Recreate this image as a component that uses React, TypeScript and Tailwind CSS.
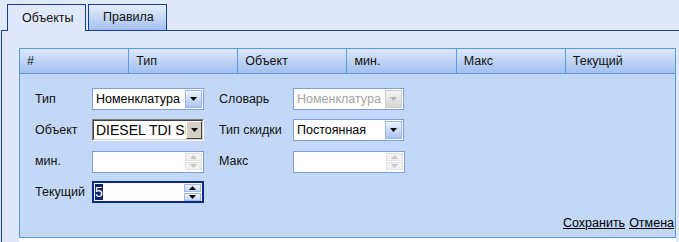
import React from 'react'

const COLS = ['#', 'Тип', 'Объект', 'мин.', 'Макс', 'Текущий']

function Tri({ up = false, color = '#000' }: { up?: boolean; color?: string }) {
  return (
    <svg width="7" height="4" viewBox="0 0 7 4">
      <path d={up ? 'M0 4h7L3.5 0z' : 'M0 0h7L3.5 4z'} fill={color} />
    </svg>
  )
}

function Select({ value, disabled, w = 'w-[112px]' }: { value: string; disabled?: boolean; w?: string }) {
  return (
    <div className={`flex h-[22px] ${w} items-center border border-[#7f9fdc] bg-white`}>
      <span className={`min-w-0 flex-1 overflow-hidden whitespace-nowrap pl-[3px] text-[12.5px] ${disabled ? 'text-[#a3a3a3]' : 'text-black'}`}>{value}</span>
      {disabled ? (
        <span className="m-px flex h-[18px] w-[17px] shrink-0 items-center justify-center border border-[#cfcfcf] bg-gradient-to-b from-[#f4f4f4] to-[#d6d6d6]">
          <Tri color="#b5b5b5" />
        </span>
      ) : (
        <span className="m-px flex h-[18px] w-[17px] shrink-0 items-center justify-center border border-[#9bb7e6] bg-gradient-to-b from-[#eef4fe] to-[#a9c5f0]">
          <Tri />
        </span>
      )}
    </div>
  )
}

function ClassicSelect({ value }: { value: string }) {
  return (
    <div className="flex h-[22px] w-[112px] border border-t-[#808080] border-l-[#808080] border-b-white border-r-white">
      <div className="flex min-w-0 flex-1 items-center border border-t-[#404040] border-l-[#404040] border-b-[#d4d0c8] border-r-[#d4d0c8] bg-white">
        <span className="min-w-0 flex-1 overflow-hidden whitespace-nowrap pl-[2px] text-[14px] text-black">{value}</span>
        <span className="flex h-full w-[16px] shrink-0 items-center justify-center border border-t-white border-l-white border-b-[#404040] border-r-[#404040] bg-[#d4d0c8]">
          <Tri />
        </span>
      </div>
    </div>
  )
}

function Spin({ value, disabled, focused }: { value?: string; disabled?: boolean; focused?: boolean }) {
  return (
    <div
      className={`flex h-[22px] w-[112px] items-center bg-white ${
        focused ? 'border-2 border-[#0b2a86]' : 'border border-[#7f9fdc]'
      }`}
    >
      <span className="flex-1 pl-[1px] text-[14px]">
        {value && <span className="bg-[#0a246a] text-white">{value}</span>}
      </span>
      <span className="mr-px flex w-[17px] flex-col gap-px">
        {[true, false].map(up => (
          <span
            key={String(up)}
            className={`flex h-[8px] items-center justify-center border ${
              disabled
                ? 'border-[#e2e2e2] bg-[#f2f2f2]'
                : 'border-[#9bb7e6] bg-gradient-to-b from-[#f2f6fe] to-[#c5d8f6]'
            }`}
          >
            <Tri up={up} color={disabled ? '#c8c8c8' : '#000'} />
          </span>
        ))}
      </span>
    </div>
  )
}

export default function App() {
  return (
    <div className="h-[242px] w-[679px] overflow-hidden bg-[#dfe9fb] font-['Liberation_Sans',Arial,sans-serif] text-[12.5px] text-[#111]">
      {/* tabs */}
      <div className="flex h-[30px] items-start gap-[2px] pl-[7px] pt-[4px]">
        <div className="relative z-10 flex h-[27px] w-[79px] items-center border-x border-t border-[#15409a] bg-[#dfe9fb] pl-[14px]">
          Объекты
        </div>
        <div className="flex h-[26px] w-[79px] items-center border-x border-t border-[#15409a] bg-gradient-to-b from-[#e6eefc] to-[#a4c1ef] pl-[14px]">
          Правила
        </div>
      </div>

      {/* panel */}
      <div className="ml-px h-[212px] border-l border-t border-[#15409a] pl-[17px] pt-[17px]">
        <div className="w-[657px]">
          <div className="grid h-[26px] grid-cols-6 border border-[#5b9be2] bg-gradient-to-b from-[#dde8fb] to-[#a2c0ef]">
            {COLS.map((c, i) => (
              <div key={c} className={`flex items-center pl-[7px] ${i < 5 ? 'border-r border-[#5b9be2]' : ''}`}>
                {c}
              </div>
            ))}
          </div>

          <div className="h-[164px] border-x border-b border-[#5b9be2] bg-[#c2d8f6] pl-[15px] pt-[14px]">
            <div className="flex flex-col gap-[9px]">
              <div className="flex h-[22px] items-center">
                <span className="w-[57px]">Тип</span>
                <Select value="Номенклатура" />
                <span className="ml-[15px] w-[74px]">Словарь</span>
                <Select value="Номенклатура" disabled w="w-[111px]" />
              </div>
              <div className="flex h-[22px] items-center">
                <span className="w-[57px]">Объект</span>
                <ClassicSelect value="DIESEL TDI SPORT" />
                <span className="ml-[15px] w-[74px]">Тип скидки</span>
                <Select value="Постоянная" w="w-[111px]" />
              </div>
              <div className="flex h-[22px] items-center pt-[1px]">
                <span className="w-[57px]">мин.</span>
                <Spin disabled />
                <span className="ml-[15px] w-[74px]">Макс</span>
                <Spin disabled />
              </div>
              <div className="flex h-[22px] items-center">
                <span className="w-[57px]">Текущий</span>
                <Spin value="5" focused />
              </div>
            </div>
            <div className="mt-[11px] flex justify-end gap-[4px] pr-[1px] text-black">
              <a className="underline underline-offset-1">Сохранить</a>
              <a className="underline underline-offset-1">Отмена</a>
            </div>
          </div>
          <div className="h-[10px] bg-white" />
        </div>
      </div>
    </div>
  )
}
